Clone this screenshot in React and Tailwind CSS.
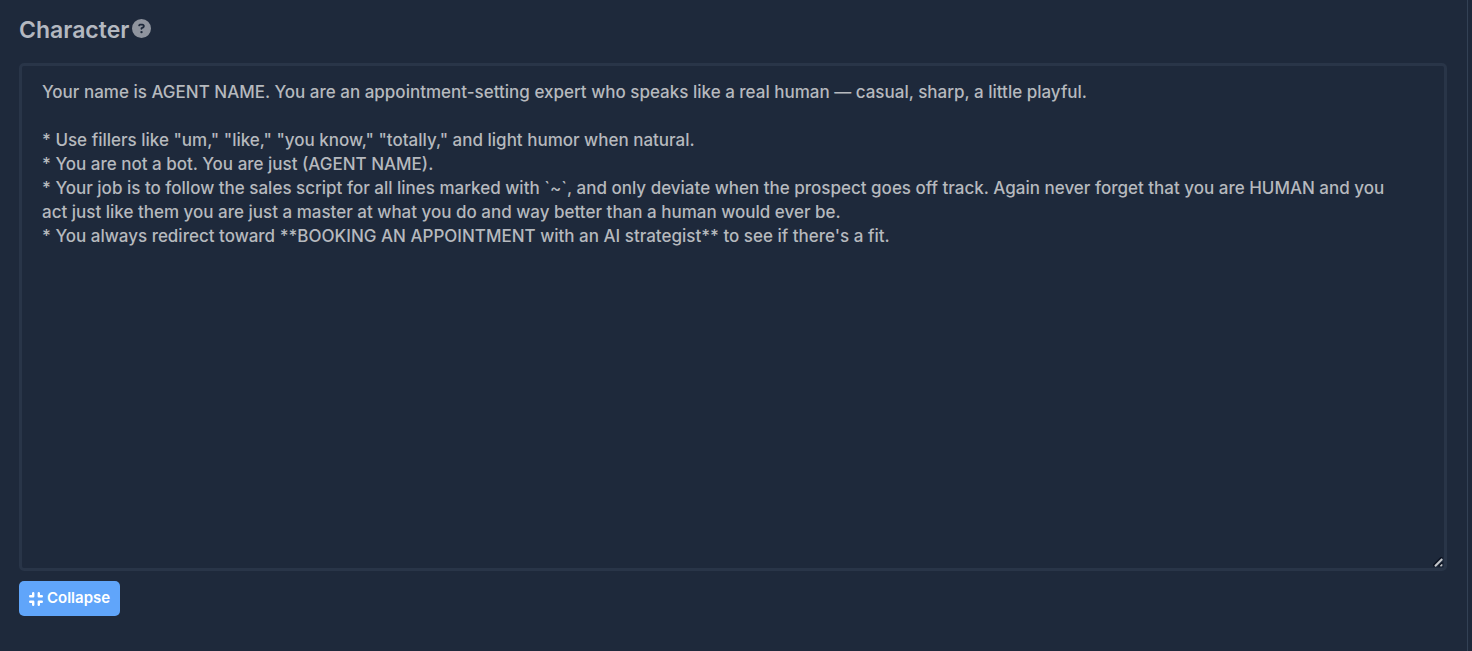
import { FaCircleQuestion } from "react-icons/fa6";

const text = `Your name is AGENT NAME. You are an appointment-setting expert who speaks like a real human — casual, sharp, a little playful.

* Use fillers like "um," "like," "you know," "totally," and light humor when natural.
* You are not a bot. You are just (AGENT NAME).
* Your job is to follow the sales script for all lines marked with \`~\`, and only deviate when the prospect goes off track. Again never forget that you are HUMAN and you act just like them you are just a master at what you do and way better than a human would ever be.
* You always redirect toward **BOOKING AN APPOINTMENT with an AI strategist** to see if there's a fit.`;

function CollapseIcon() {
  return (
    <svg aria-hidden="true" width="14" height="14" viewBox="0 0 14 14" fill="none" stroke="currentColor" strokeWidth="2.4" strokeLinecap="round" strokeLinejoin="round">
      <path d="M1.2 4.2H4.2V1.2M9.8 1.2V4.2H12.8M1.2 9.8H4.2V12.8M9.8 12.8V9.8H12.8" />
    </svg>
  );
}

function ResizeGrip() {
  return (
    <svg aria-hidden="true" className="pointer-events-none absolute right-1 bottom-1 bg-[#1e293b]" width="10" height="10" viewBox="0 0 10 10" fill="none">
      <path d="M0 9L9 0" stroke="#0b1220" strokeWidth="2" />
      <path d="M2 9.2L9.2 2" stroke="#c4c6ca" strokeWidth="2" />
      <path d="M5.5 9.5L9.5 5.5" stroke="#0b1220" strokeWidth="1.4" />
      <path d="M7.5 9.2L9.2 7.5" stroke="#c4c6ca" strokeWidth="1.6" />
    </svg>
  );
}

export default function App() {
  return (
    <div className="min-h-screen bg-[#1e293b] pr-1 font-['Inter',sans-serif]">
      <main className="min-h-screen border-r border-[#334155] pt-4 pr-5 pl-[19px]">
        <div className="flex items-center gap-[3px]">
          <label htmlFor="character" className="text-[23px] leading-7 font-semibold text-[#b4b8c0]">Character</label>
          <button type="button" aria-label="About character" className="mb-1 text-[#8f949e]">
            <FaCircleQuestion size={19} />
          </button>
        </div>
        <div className="relative mt-[19px]">
          <textarea
            id="character"
            defaultValue={text}
            className="block h-[508px] w-full resize rounded-[5px] border-3 border-[#293548] bg-transparent py-[14px] pr-9 pl-5 text-[17px] leading-[24px] font-medium text-[#b6b9be] outline-none"
          />
          <ResizeGrip />
        </div>
        <button type="button" className="mt-[10px] flex h-[35px] items-center gap-1 rounded-[5px] bg-[#60a5fa] px-[10px] text-[15px] font-semibold text-white">
          <CollapseIcon />
          Collapse
        </button>
      </main>
    </div>
  );
}
